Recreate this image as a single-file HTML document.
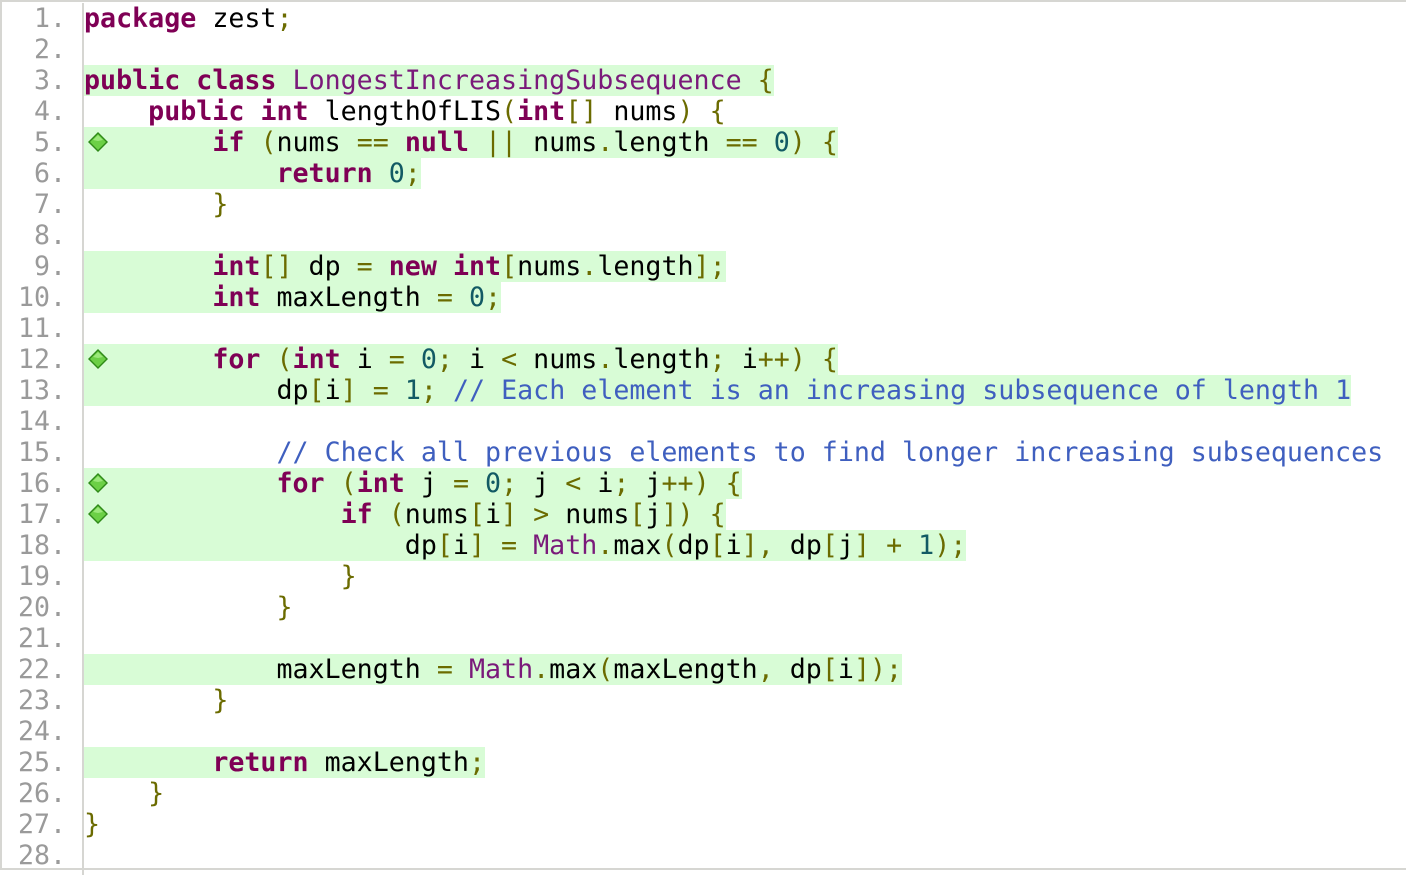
<!DOCTYPE html>
<html><head><meta charset="utf-8"><style>
html,body{margin:0;padding:0;background:#fff;}
body{width:1408px;height:876px;overflow:hidden;position:relative;}
.frame{position:absolute;left:0;top:0;width:1406px;height:870px;border:2px solid #d6d6d2;border-right:none;box-sizing:border-box;}
.gutter{position:absolute;left:2px;top:3px;width:80px;height:872px;border-right:2px solid #d6d6d2;}
.code{position:absolute;left:84px;top:3px;font-family:"DejaVu Sans Mono","Liberation Mono",monospace;font-size:26.65px;}
.ln{position:absolute;left:0;width:64px;text-align:right;font-family:"DejaVu Sans Mono","Liberation Mono",monospace;font-size:26.6px;color:#9a9a9a;line-height:31px;}
.l{height:31px;line-height:31px;white-space:pre;color:#000;position:relative;}
.h{background:#d8fcd6;}
.k{color:#7f0055;font-weight:bold;}
.p{color:#6b6b00;}
.n{color:#125a64;}
.c{color:#3f5fbf;}
.m{color:#7a1a7a;}
.d{position:absolute;left:4px;top:5px;width:20px;height:20px;}
</style></head><body>
<div class="frame"></div>
<div class="gutter">
<div class="ln" style="top:0">1.</div><div class="ln" style="top:31px">2.</div><div class="ln" style="top:62px">3.</div><div class="ln" style="top:93px">4.</div><div class="ln" style="top:124px">5.</div><div class="ln" style="top:155px">6.</div><div class="ln" style="top:186px">7.</div><div class="ln" style="top:217px">8.</div><div class="ln" style="top:248px">9.</div><div class="ln" style="top:279px">10.</div><div class="ln" style="top:310px">11.</div><div class="ln" style="top:341px">12.</div><div class="ln" style="top:372px">13.</div><div class="ln" style="top:403px">14.</div><div class="ln" style="top:434px">15.</div><div class="ln" style="top:465px">16.</div><div class="ln" style="top:496px">17.</div><div class="ln" style="top:527px">18.</div><div class="ln" style="top:558px">19.</div><div class="ln" style="top:589px">20.</div><div class="ln" style="top:620px">21.</div><div class="ln" style="top:651px">22.</div><div class="ln" style="top:682px">23.</div><div class="ln" style="top:713px">24.</div><div class="ln" style="top:744px">25.</div><div class="ln" style="top:775px">26.</div><div class="ln" style="top:806px">27.</div><div class="ln" style="top:837px">28.</div>
</div>
<div class="code">
<div class="l"><span class="k">package</span> zest<span class="p">;</span></div>
<div class="l"> </div>
<div class="l"><span class="h"><span class="k">public</span> <span class="k">class</span> <span class="m">LongestIncreasingSubsequence</span> <span class="p">{</span></span></div>
<div class="l">    <span class="k">public</span> <span class="k">int</span> lengthOfLIS<span class="p">(</span><span class="k">int</span><span class="p">[]</span> nums<span class="p">)</span> <span class="p">{</span></div>
<div class="l"><span class="h">        <span class="k">if</span> <span class="p">(</span>nums <span class="p">==</span> <span class="k">null</span> <span class="p">||</span> nums<span class="p">.</span>length <span class="p">==</span> <span class="n">0</span><span class="p">)</span> <span class="p">{</span></span><svg class="d" width="20" height="20" viewBox="0 0 20 20"><path d="M10 0L20 10L10 20L0 10Z" fill="#2f8a18"/><path d="M10 2L18 10L10 18L2 10Z" fill="#6cd046"/><path d="M10 3L15 8L10 9L5 8Z" fill="#9be87a"/></svg></div>
<div class="l"><span class="h">            <span class="k">return</span> <span class="n">0</span><span class="p">;</span></span></div>
<div class="l">        <span class="p">}</span></div>
<div class="l"> </div>
<div class="l"><span class="h">        <span class="k">int</span><span class="p">[]</span> dp <span class="p">=</span> <span class="k">new</span> <span class="k">int</span><span class="p">[</span>nums<span class="p">.</span>length<span class="p">];</span></span></div>
<div class="l"><span class="h">        <span class="k">int</span> maxLength <span class="p">=</span> <span class="n">0</span><span class="p">;</span></span></div>
<div class="l"> </div>
<div class="l"><span class="h">        <span class="k">for</span> <span class="p">(</span><span class="k">int</span> i <span class="p">=</span> <span class="n">0</span><span class="p">;</span> i <span class="p">&lt;</span> nums<span class="p">.</span>length<span class="p">;</span> i<span class="p">++)</span> <span class="p">{</span></span><svg class="d" width="20" height="20" viewBox="0 0 20 20"><path d="M10 0L20 10L10 20L0 10Z" fill="#2f8a18"/><path d="M10 2L18 10L10 18L2 10Z" fill="#6cd046"/><path d="M10 3L15 8L10 9L5 8Z" fill="#9be87a"/></svg></div>
<div class="l"><span class="h">            dp<span class="p">[</span>i<span class="p">]</span> <span class="p">=</span> <span class="n">1</span><span class="p">;</span> <span class="c">// Each element is an increasing subsequence of length 1</span></span></div>
<div class="l"> </div>
<div class="l">            <span class="c">// Check all previous elements to find longer increasing subsequences</span></div>
<div class="l"><span class="h">            <span class="k">for</span> <span class="p">(</span><span class="k">int</span> j <span class="p">=</span> <span class="n">0</span><span class="p">;</span> j <span class="p">&lt;</span> i<span class="p">;</span> j<span class="p">++)</span> <span class="p">{</span></span><svg class="d" width="20" height="20" viewBox="0 0 20 20"><path d="M10 0L20 10L10 20L0 10Z" fill="#2f8a18"/><path d="M10 2L18 10L10 18L2 10Z" fill="#6cd046"/><path d="M10 3L15 8L10 9L5 8Z" fill="#9be87a"/></svg></div>
<div class="l"><span class="h">                <span class="k">if</span> <span class="p">(</span>nums<span class="p">[</span>i<span class="p">]</span> <span class="p">&gt;</span> nums<span class="p">[</span>j<span class="p">])</span> <span class="p">{</span></span><svg class="d" width="20" height="20" viewBox="0 0 20 20"><path d="M10 0L20 10L10 20L0 10Z" fill="#2f8a18"/><path d="M10 2L18 10L10 18L2 10Z" fill="#6cd046"/><path d="M10 3L15 8L10 9L5 8Z" fill="#9be87a"/></svg></div>
<div class="l"><span class="h">                    dp<span class="p">[</span>i<span class="p">]</span> <span class="p">=</span> <span class="m">Math</span><span class="p">.</span>max<span class="p">(</span>dp<span class="p">[</span>i<span class="p">],</span> dp<span class="p">[</span>j<span class="p">]</span> <span class="p">+</span> <span class="n">1</span><span class="p">);</span></span></div>
<div class="l">                <span class="p">}</span></div>
<div class="l">            <span class="p">}</span></div>
<div class="l"> </div>
<div class="l"><span class="h">            maxLength <span class="p">=</span> <span class="m">Math</span><span class="p">.</span>max<span class="p">(</span>maxLength<span class="p">,</span> dp<span class="p">[</span>i<span class="p">]);</span></span></div>
<div class="l">        <span class="p">}</span></div>
<div class="l"> </div>
<div class="l"><span class="h">        <span class="k">return</span> maxLength<span class="p">;</span></span></div>
<div class="l">    <span class="p">}</span></div>
<div class="l"><span class="p">}</span></div>
<div class="l"> </div>
</div>
</body></html>
